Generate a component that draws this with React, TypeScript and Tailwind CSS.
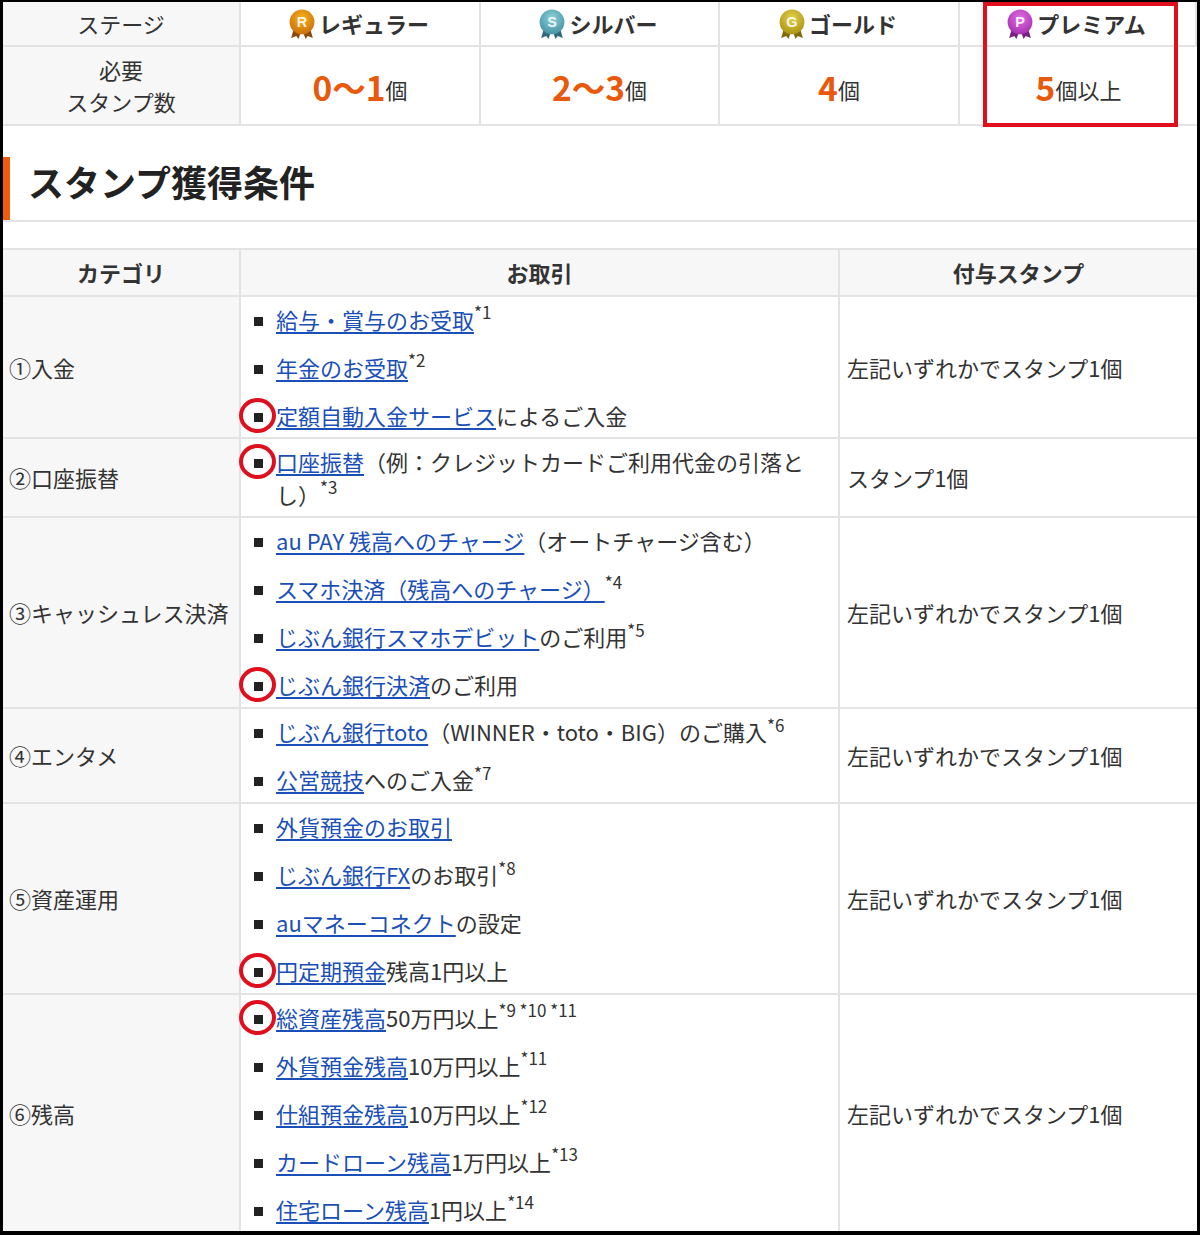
const FONT = "font-['Noto_Sans_CJK_JP','Noto_Sans',sans-serif]";

type Stage = { letter: string; name: string; num: string; unit: string; from: string; to: string; dark: string };

const STAGES: Stage[] = [
  { letter: 'R', name: 'レギュラー', num: '0〜1', unit: '個', from: '#f5b21c', to: '#c96a08', dark: '#8a4a0c' },
  { letter: 'S', name: 'シルバー', num: '2〜3', unit: '個', from: '#8fd0d8', to: '#3f8fa0', dark: '#2f6a78' },
  { letter: 'G', name: 'ゴールド', num: '4', unit: '個', from: '#e3d14c', to: '#a8900f', dark: '#7d6a0c' },
  { letter: 'P', name: 'プレミアム', num: '5', unit: '個以上', from: '#df6fe0', to: '#a32cae', dark: '#74207e' },
];

type Item = { link: string; rest?: string; note?: string; mark?: boolean };
type Row = { cat: string; stamp: string; h: string; items: Item[] };

const ROWS: Row[] = [
  {
    cat: '①入金',
    stamp: '左記いずれかでスタンプ1個',
    h: 'h-[142px]',
    items: [
      { link: '給与・賞与のお受取', note: '*1' },
      { link: '年金のお受取', note: '*2' },
      { link: '定額自動入金サービス', rest: 'によるご入金', mark: true },
    ],
  },
  {
    cat: '②口座振替',
    stamp: 'スタンプ1個',
    h: 'h-[79px]',
    items: [{ link: '口座振替', rest: '（例：クレジットカードご利用代金の引落とし）', note: '*3', mark: true }],
  },
  {
    cat: '③キャッシュレス決済',
    stamp: '左記いずれかでスタンプ1個',
    h: 'h-[191px]',
    items: [
      { link: 'au PAY 残高へのチャージ', rest: '（オートチャージ含む）' },
      { link: 'スマホ決済（残高へのチャージ）', note: '*4' },
      { link: 'じぶん銀行スマホデビット', rest: 'のご利用', note: '*5' },
      { link: 'じぶん銀行決済', rest: 'のご利用', mark: true },
    ],
  },
  {
    cat: '④エンタメ',
    stamp: '左記いずれかでスタンプ1個',
    h: 'h-[95px]',
    items: [
      { link: 'じぶん銀行toto', rest: '（WINNER・toto・BIG）のご購入', note: '*6' },
      { link: '公営競技', rest: 'へのご入金', note: '*7' },
    ],
  },
  {
    cat: '⑤資産運用',
    stamp: '左記いずれかでスタンプ1個',
    h: 'h-[191px]',
    items: [
      { link: '外貨預金のお取引' },
      { link: 'じぶん銀行FX', rest: 'のお取引', note: '*8' },
      { link: 'auマネーコネクト', rest: 'の設定' },
      { link: '円定期預金', rest: '残高1円以上', mark: true },
    ],
  },
  {
    cat: '⑥残高',
    stamp: '左記いずれかでスタンプ1個',
    h: 'h-[238px]',
    items: [
      { link: '総資産残高', rest: '50万円以上', note: '*9 *10 *11', mark: true },
      { link: '外貨預金残高', rest: '10万円以上', note: '*11' },
      { link: '仕組預金残高', rest: '10万円以上', note: '*12' },
      { link: 'カードローン残高', rest: '1万円以上', note: '*13' },
      { link: '住宅ローン残高', rest: '1円以上', note: '*14' },
    ],
  },
];

function Medal({ stage }: { stage: Stage }) {
  const id = `medal-${stage.letter}`;
  return (
    <svg width="28" height="30" viewBox="0 0 27 29" className="shrink-0">
      <defs>
        <radialGradient id={id} cx="0.5" cy="0.35" r="0.7">
          <stop offset="0" stopColor={stage.from} />
          <stop offset="1" stopColor={stage.to} />
        </radialGradient>
      </defs>
      <path d="M6 18 L3 28 L8 26 L10 29 L13 21 Z" fill={stage.dark} />
      <path d="M21 18 L24 28 L19 26 L17 29 L14 21 Z" fill={stage.dark} />
      <circle cx="13.5" cy="12.5" r="12" fill={`url(#${id})`} />
      <text x="13.5" y="17.5" textAnchor="middle" fontSize="14" fontFamily="Liberation Sans" fontWeight="700" fill="#fff" fillOpacity="0.9">
        {stage.letter}
      </text>
    </svg>
  );
}

function Ring() {
  return (
    <span className="absolute left-[-15px] top-[-15px] h-[35px] w-[37px] rounded-[50%] border-[4px] border-[#e00f1e]" />
  );
}

function ListItem({ item }: { item: Item }) {
  return (
    <li className="relative flex pl-[35px]">
      <span className="absolute left-[13px] top-[14px] size-[9px] bg-[#222]">
        {item.mark && <Ring />}
      </span>
      <div className="leading-[33px]">
        <a className="text-[#1a4fb8] underline underline-offset-[3px]">{item.link}</a>
        {item.rest}
        {item.note && <sup className="relative top-[-1px] align-super text-[17px] leading-none">{item.note}</sup>}
      </div>
    </li>
  );
}

export default function App() {
  return (
    <div className={`${FONT} relative h-[1235px] w-[1200px] overflow-hidden border-t-2 border-r-[3px] border-b-4 border-l-[3px] border-black bg-white text-[22px] text-[#333]`}>
      {/* stage table */}
      <div className="grid grid-cols-[238px_240px_239px_240px_237px] border-b-2 border-[#e3e3e3]">
        <div className="flex h-[45px] items-center justify-center border-r-2 border-b-2 border-[#e3e3e3] bg-[#f7f7f7]">ステージ</div>
        {STAGES.map((s) => (
          <div key={s.letter} className="flex h-[45px] items-center justify-center gap-[3px] border-r-2 border-b-2 border-[#e3e3e3] pr-[3px] font-bold last:border-r-0">
            <Medal stage={s} />
            {s.name}
          </div>
        ))}
        <div className="flex h-[77px] flex-col items-center justify-center border-r-2 border-[#e3e3e3] bg-[#f7f7f7] pb-[2px] leading-[32px]">
          <span>必要</span>
          <span>スタンプ数</span>
        </div>
        {STAGES.map((s) => (
          <div key={s.letter} className="flex h-[77px] items-end justify-center border-r-2 border-[#e3e3e3] pb-[15px] last:border-r-0">
            <span className="text-[33.5px] leading-[44px] font-bold text-[#e8590c]">{s.num}</span>
            <span className="pb-[3px] leading-[34px]">{s.unit}</span>
          </div>
        ))}
      </div>

      {/* heading */}
      <div className="mt-[31px] flex h-[65px] items-center border-b-2 border-[#e3e3e3]">
        <div className="h-full w-[7px] bg-[#ee5c10]" />
        <h2 className="pb-[15px] pl-[18px] text-[36px] font-bold text-[#222]">スタンプ獲得条件</h2>
      </div>

      {/* conditions table */}
      <div className="mt-[26px] border-t-2 border-[#e3e3e3]">
        <div className="flex h-[47px] border-b-2 border-[#e3e3e3] bg-[#f7f7f7] font-bold">
          <div className="flex w-[238px] items-center justify-center border-r-2 border-[#e3e3e3]">カテゴリ</div>
          <div className="flex w-[599px] items-center justify-center border-r-2 border-[#e3e3e3]">お取引</div>
          <div className="flex flex-1 items-center justify-center">付与スタンプ</div>
        </div>
        {ROWS.map((r) => (
          <div key={r.cat} className={`flex ${r.h} border-b-2 border-[#e3e3e3]`}>
            <div className="flex w-[238px] items-center border-r-2 border-[#e3e3e3] bg-[#f7f7f7] pl-[6px]">{r.cat}</div>
            <ul className="flex w-[599px] flex-col justify-center gap-[15px] border-r-2 border-[#e3e3e3] pr-[30px]">
              {r.items.map((it) => (
                <ListItem key={it.link} item={it} />
              ))}
            </ul>
            <div className="flex flex-1 items-center pl-[7px]">{r.stamp}</div>
          </div>
        ))}
      </div>

      {/* highlight */}
      <div className="absolute top-0 left-[980px] h-[125px] w-[195px] border-[4px] border-[#e00f1e]" />
    </div>
  );
}
